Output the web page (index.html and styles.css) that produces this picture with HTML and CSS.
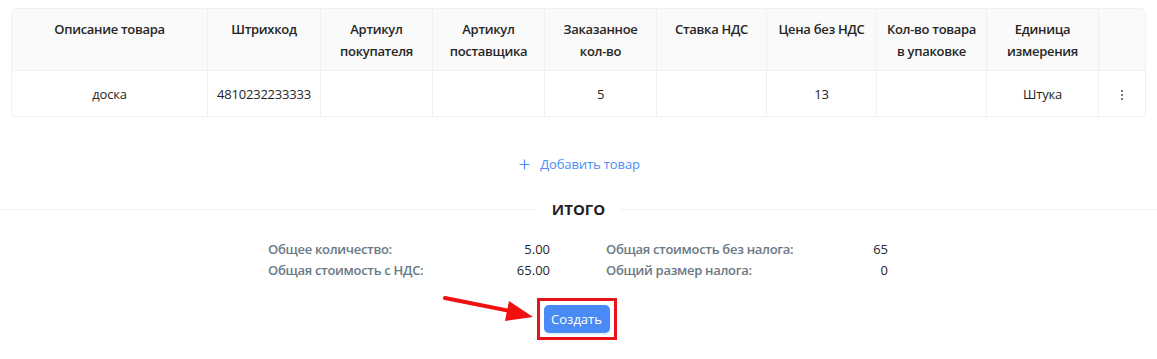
FILE: index.html
```html
<!DOCTYPE html>
<html lang="ru">

<head>
     <meta charset="UTF-8">
     <meta name="viewport" content="width=device-width, initial-scale=1.0">
     <title>Заказ</title>
     <link rel="stylesheet" href="styles.css">
</head>

<body>
     <div class="page">
          <div class="tableWrap">
               <table class="goods">
                    <colgroup>
                         <col style="width: 196px">
                         <col style="width: 113px">
                         <col style="width: 112px">
                         <col style="width: 112px">
                         <col style="width: 112px">
                         <col style="width: 110px">
                         <col style="width: 110px">
                         <col style="width: 110px">
                         <col style="width: 112px">
                         <col style="width: 47px">
                    </colgroup>
                    <thead>
                         <tr>
                              <th>Описание товара</th>
                              <th>Штрихкод</th>
                              <th>Артикул покупателя</th>
                              <th>Артикул поставщика</th>
                              <th>Заказанное кол-во</th>
                              <th>Ставка НДС</th>
                              <th>Цена без НДС</th>
                              <th>Кол-во товара в&nbsp;упаковке</th>
                              <th>Единица измерения</th>
                              <th></th>
                         </tr>
                    </thead>
                    <tbody>
                         <tr>
                              <td>доска</td>
                              <td>4810232233333</td>
                              <td></td>
                              <td></td>
                              <td>5</td>
                              <td></td>
                              <td>13</td>
                              <td></td>
                              <td>Штука</td>
                              <td><span class="more"><i></i><i></i><i></i></span></td>
                         </tr>
                    </tbody>
               </table>
          </div>

          <div class="addRow">
               <button class="addBtn">
                    <svg width="11" height="11" viewBox="0 0 11 11">
                         <path d="M5.5 0.5v10M0.5 5.5h10" stroke="currentColor" stroke-width="1.2" fill="none"/>
                    </svg>
                    <span>Добавить товар</span>
               </button>
          </div>

          <div class="divider"><span>ИТОГО</span></div>

          <div class="summary">
               <div class="sumCol">
                    <span class="label">Общее количество:</span>
                    <span class="value">5.00</span>
                    <span class="label">Общая стоимость с НДС:</span>
                    <span class="value">65.00</span>
               </div>
               <div class="sumCol">
                    <span class="label">Общая стоимость без налога:</span>
                    <span class="value">65</span>
                    <span class="label">Общий размер налога:</span>
                    <span class="value">0</span>
               </div>
          </div>

          <div class="submitRow">
               <div class="highlight">
                    <svg class="arrow" width="92" height="32" viewBox="0 0 92 32">
                         <path d="M2 4 L72 18" stroke="#f01010" stroke-width="4" stroke-linecap="round" fill="none"/>
                         <path d="M66 7 L90 23 L62 27 Z" fill="#f01010"/>
                    </svg>
                    <button class="createBtn">Создать</button>
               </div>
          </div>
     </div>
</body>

</html>
```

FILE: styles.css
```css
* {
     margin: 0px;
     padding: 0px;
     box-sizing: border-box;
     font-family: "Open Sans", "Noto Sans", sans-serif;
}

body {
     background-color: #fff;
     color: #262626;
}

.page {
     width: 100%;
     padding-top: 8px;
}

.tableWrap {
     padding: 0px 12px 0px 11px;
}

.goods {
     width: 1134px;
     border-collapse: separate;
     border-spacing: 0px;
     table-layout: fixed;
     font-size: 13px;
     border: 1px solid #f0f0f0;
     border-radius: 6px;
     border-bottom: none;
     border-right: none;

     th, td {
          border-right: 1px solid #f0f0f0;
          border-bottom: 1px solid #f0f0f0;
          text-align: center;
     }
     th {
          background-color: #fafafa;
          font-weight: 600;
          line-height: 22px;
          height: 62px;
          vertical-align: top;
          padding: 9px 4px 8px;
          color: #262626;
          letter-spacing: -0.3px;
     }
     th:first-child {
          border-top-left-radius: 6px;
     }
     th:last-child {
          border-top-right-radius: 6px;
     }
     td {
          height: 46px;
          padding: 0px 8px;
          vertical-align: middle;
          line-height: 20px;
          letter-spacing: -0.2px;
     }
}

.more {
     display: inline-flex;
     flex-direction: column;
     gap: 2px;
     vertical-align: middle;
     i {
          display: block;
          width: 2px;
          height: 2px;
          background-color: #777;
     }
}

.addRow {
     display: flex;
     justify-content: center;
     padding-top: 37px;
     padding-left: 2px;
}

.addBtn {
     display: flex;
     align-items: center;
     gap: 10px;
     border: none;
     background: none;
     color: #4b8ef5;
     font-size: 13px;
     line-height: 20px;
     letter-spacing: -0.1px;
}

.divider {
     display: flex;
     align-items: center;
     margin-top: 25px;
     font-size: 15px;
     font-weight: 700;
     color: #1f1f1f;
     line-height: 20px;
     span {
          padding: 0px 16px;
     }
}

.divider::before, .divider::after {
     content: "";
     flex: 1;
     border-top: 1px solid #f0f0f0;
}

.summary {
     display: flex;
     justify-content: center;
     gap: 56px;
     padding-top: 20px;
     padding-right: 1px;
}

.sumCol {
     width: 282px;
     display: grid;
     grid-template-columns: 1fr auto;
     font-size: 13px;
     line-height: 21px;
     .label {
          color: #6b7886;
          font-weight: 600;
          letter-spacing: -0.3px;
     }
     .value {
          text-align: right;
          color: #262626;
     }
}

.submitRow {
     display: flex;
     justify-content: center;
     padding-top: 17px;
     padding-right: 4px;
}

.highlight {
     position: relative;
     border: 3px solid #e8141c;
     padding: 4px;
}

.arrow {
     position: absolute;
     left: -97px;
     top: -7px;
}

.createBtn {
     display: block;
     width: 66px;
     height: 28px;
     border: none;
     border-radius: 5px;
     background-color: #4a8af4;
     color: #fff;
     font-size: 13px;
     box-shadow: 0px 2px 0px rgba(5, 145, 255, 0.1);
}
```
